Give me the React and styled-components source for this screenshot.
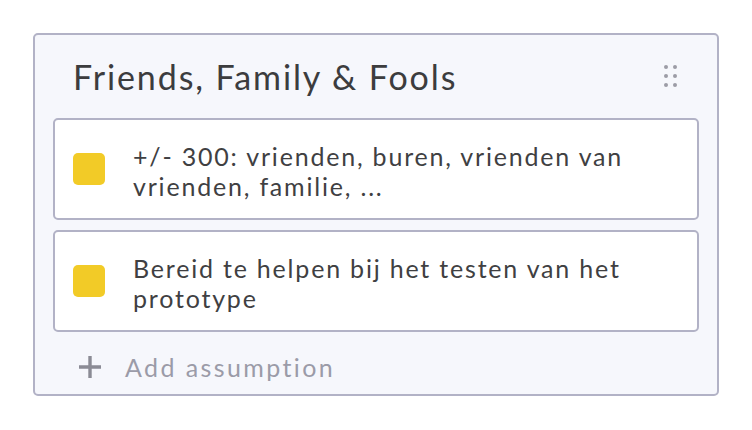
import React from "react";
import styled, { createGlobalStyle } from "styled-components";

const GlobalStyle = createGlobalStyle`
  body {
    margin: 0;
    background: #ffffff;
    font-family: "Lato", "Open Sans", sans-serif;
  }
`;

const assumptions = [
  { id: 1, text: "+/- 300: vrienden, buren, vrienden van vrienden, familie, ..." },
  { id: 2, text: "Bereid te helpen bij het testen van het prototype" },
];

const App = () => {
  return (
    <>
      <GlobalStyle />
      <Page>
        <Card>
          <Header>
            <Title>Friends, Family &amp; Fools</Title>
            <DragHandle aria-label="drag">
              {Array.from({ length: 6 }).map((_, i) => (
                <Dot key={i} />
              ))}
            </DragHandle>
          </Header>
          <List>
            {assumptions.map((a) => (
              <Item key={a.id}>
                <Swatch color="#f2cb27" />
                <ItemText>{a.text}</ItemText>
              </Item>
            ))}
          </List>
          <AddRow>
            <PlusIcon viewBox="0 0 24 24">
              <path d="M12 1v22M1 12h22" stroke="#8b8b95" strokeWidth="3.4" />
            </PlusIcon>
            <AddText>Add assumption</AddText>
          </AddRow>
        </Card>
      </Page>
    </>
  );
};

export default App;

const Page = styled.div`
  padding: 33px;
`;

const Card = styled.div`
  box-sizing: border-box;
  width: 686px;
  height: 363px;
  border: 2px solid #b2b2c6;
  border-radius: 5px;
  background: #f6f7fc;
  padding: 0 18px;
  display: flex;
  flex-direction: column;
`;

const Header = styled.div`
  height: 83px;
  display: flex;
  align-items: center;
  justify-content: space-between;
  padding: 0 22px 0 20px;
`;

const Title = styled.h2`
  margin: 0;
  font-size: 34px;
  font-weight: 400;
  color: #3c3c3e;
  letter-spacing: 1.9px;
`;

const DragHandle = styled.div`
  display: grid;
  grid-template-columns: repeat(2, 4px);
  gap: 5px 5px;
  margin-top: -2px;
`;

const Dot = styled.span`
  width: 4px;
  height: 4px;
  border-radius: 50%;
  background: #9c9ca6;
`;

const List = styled.div`
  display: flex;
  flex-direction: column;
  gap: 10px;
`;

const Item = styled.div`
  box-sizing: border-box;
  height: 102px;
  background: #ffffff;
  border: 2px solid #b2b2c6;
  border-radius: 5px;
  padding: 0 18px;
  display: flex;
  align-items: center;
  gap: 28px;
`;

const Swatch = styled.span`
  flex: 0 0 32px;
  height: 32px;
  border-radius: 5px;
  background: ${(p) => p.color};
`;

const ItemText = styled.p`
  margin: 4px 0 0;
  max-width: 546px;
  font-size: 25px;
  line-height: 30px;
  color: #404042;
  letter-spacing: 1.8px;
`;

const AddRow = styled.div`
  height: 46px;
  margin-top: 12px;
  display: flex;
  align-items: center;
  padding-left: 25px;
  gap: 23px;
`;

const PlusIcon = styled.svg`
  width: 24px;
  height: 24px;
`;

const AddText = styled.span`
  font-size: 25px;
  color: #9b9ba8;
  letter-spacing: 2.4px;
`;
